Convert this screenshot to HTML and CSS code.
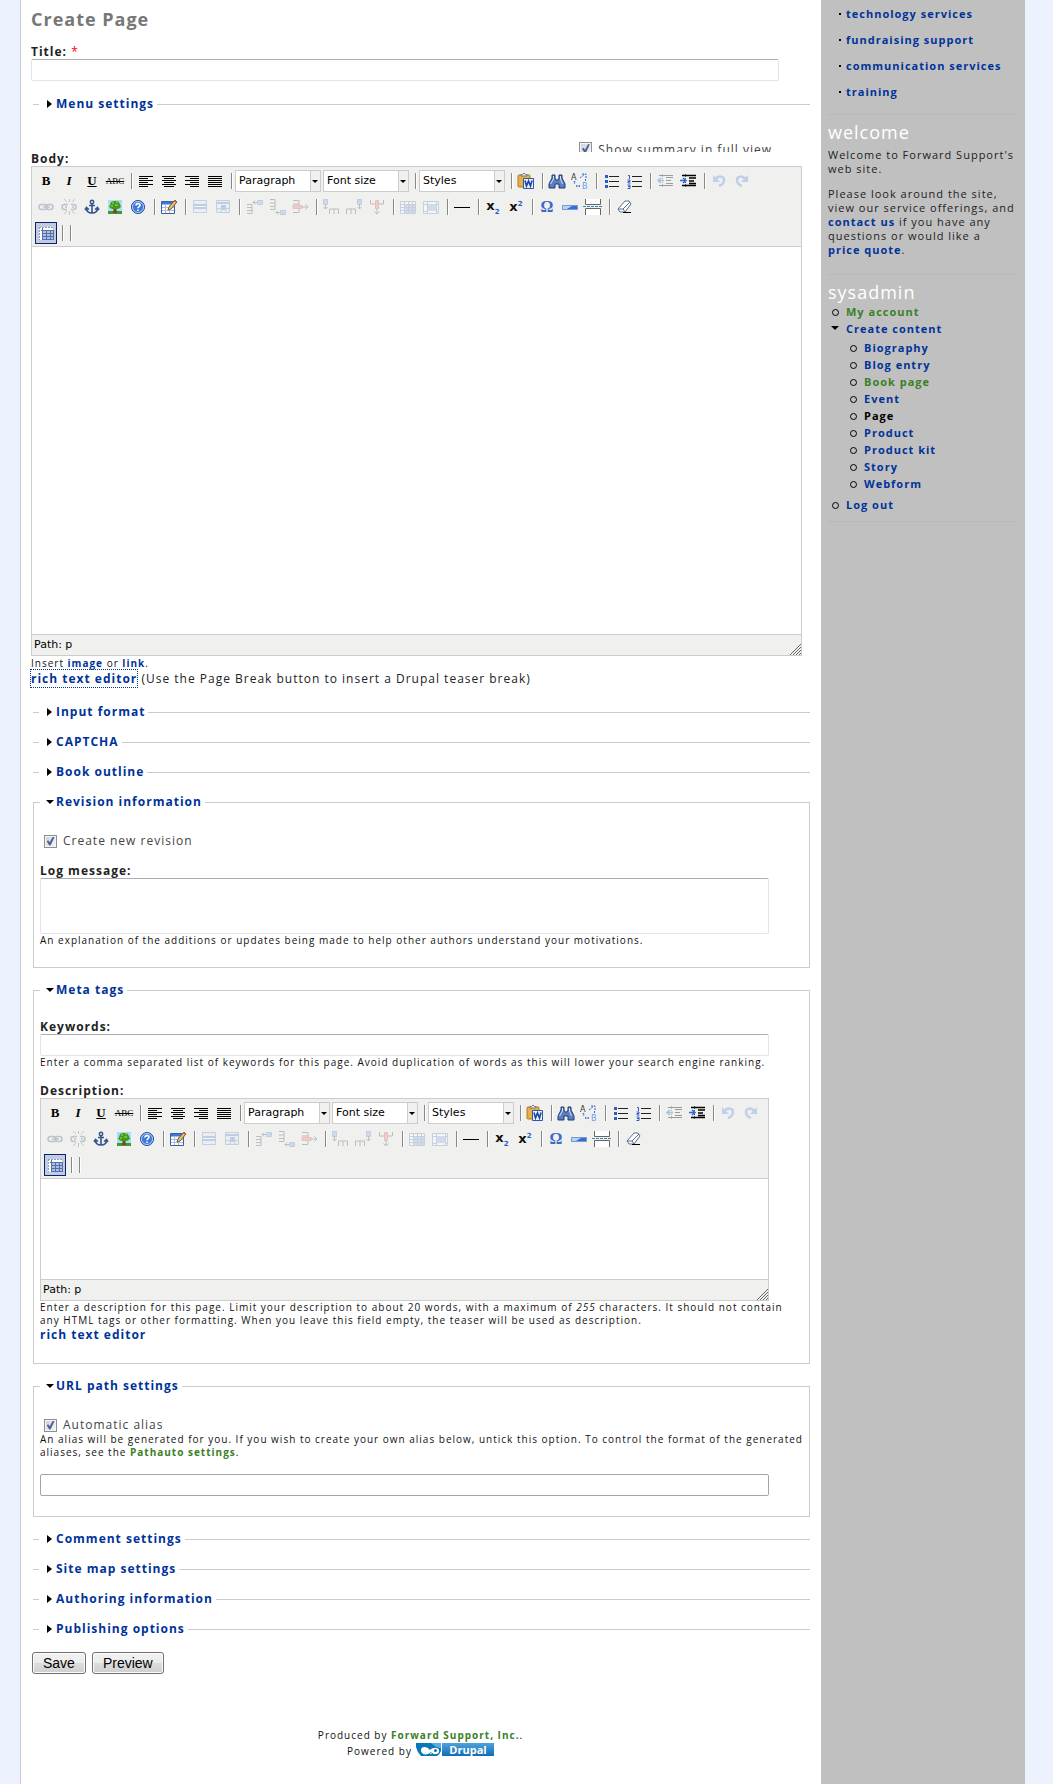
FILE: index.html
```html
<!DOCTYPE html>
<html lang="en">
<head>
<meta charset="utf-8">
<title>Create Page</title>
<link rel="stylesheet" href="styles.css">
</head>
<body>
<svg class="sprite" aria-hidden="true">
  <symbol id="i-left" viewBox="0 0 20 20"><path d="M3 5.500h14M3 7.500h9M3 9.500h14M3 11.500h9M3 13.500h14M3 15.500h9" stroke="#000"/></symbol>
  <symbol id="i-center" viewBox="0 0 20 20"><path d="M3 5.500h14M5 7.500h10M3 9.500h14M5 11.500h10M3 13.500h14M5 15.500h10" stroke="#000"/></symbol>
  <symbol id="i-right" viewBox="0 0 20 20"><path d="M3 5.500h14M8 7.500h9M3 9.500h14M8 11.500h9M3 13.500h14M8 15.500h9" stroke="#000"/></symbol>
  <symbol id="i-full" viewBox="0 0 20 20"><path d="M3 5.500h14M3 7.500h14M3 9.500h14M3 11.500h14M3 13.500h14M3 15.500h14" stroke="#000"/></symbol>
  <symbol id="i-paste" viewBox="0 0 20 20"><rect x="2" y="4" width="12" height="12" rx="1" fill="#e5b04a" stroke="#b07a1c"/><path d="M5 5V3.500h1.500L8 2l1.500 1.500H11V5z" fill="#eee" stroke="#777"/><path d="M7.500 7.500h10v10h-10z" fill="#eaf1ff" stroke="#2d57a8"/><path d="M9 9.500l1.500 5.500 2-5 2 5 1.500-5.500" fill="none" stroke="#1c469c" stroke-width="1.600"/></symbol>
  <symbol id="i-find" viewBox="0 0 20 20"><path d="M5 4h3v3l1 2h2l1-2V4h3v3l3 6v4h-6v-4H8v4H2v-4l3-6z" fill="#5b7fbf" stroke="#1f3b73"/><path d="M6.500 5v3l-3 5M13.500 5v3l2 5" stroke="#d5e2fa" fill="none"/></symbol>
  <symbol id="i-replace" viewBox="0 0 20 20"><text x="1" y="9" class="micro" fill="#333">A</text><text x="12" y="18" class="micro" fill="#6f9bea">B</text><path d="M4.500 10v3M6 15h5" stroke="#2f66d8" stroke-width="1.500" stroke-dasharray="1.500 1"/><path d="M10 7l5-4M12 3h4v4M15.500 8v3" stroke="#2f66d8" fill="none" stroke-dasharray="2 1"/></symbol>
  <symbol id="i-ul" viewBox="0 0 20 20"><path d="M8 5.500h10M8 10.500h10M8 15.500h10" stroke="#222"/><path d="M4 4h3v3H4zM4 9h3v3H4zM4 14h3v3H4z" fill="#2c5bc4"/></symbol>
  <symbol id="i-ol" viewBox="0 0 20 20"><path d="M8 5.500h10M8 10.500h10M8 15.500h10" stroke="#222"/><path d="M4 4.500h1.500V8M3.500 9h2.500v1.500H4V12h2.500M3.500 14H6v3.500H3.500M4 15.500h2" fill="none" stroke="#2c5bc4"/></symbol>
  <symbol id="i-outdent" viewBox="0 0 20 20"><path d="M4 4.500h14M11 6.500h7M11 9.500h5M11 12.500h7M4 14.500h14" stroke="#000"/><path d="M7.500 3v14" stroke="#555" stroke-dasharray="1 1"/><path d="M9 9.500H3M6 7L3 9.500 6 12" fill="none" stroke="#2c66e0" stroke-width="1.500"/></symbol>
  <symbol id="i-indent" viewBox="0 0 20 20"><path d="M4 4.500h14M11 7h7M11 10h5M11 12.500h7M4 14.500h14" stroke="#000" stroke-width="1.500"/><path d="M7.500 3v14" stroke="#555" stroke-dasharray="1 1"/><path d="M2 9.500h6M5 7l3 2.500L5 12" fill="none" stroke="#2c66e0" stroke-width="1.500"/></symbol>
  <symbol id="i-undo" viewBox="0 0 20 20"><path d="M6 9c3-5 9-4 9 0 0 3-2 5-5 6" fill="none" stroke="#6b93e0" stroke-width="2.500"/><path d="M4 4v7h7z" fill="#6b93e0"/></symbol>
  <symbol id="i-redo" viewBox="0 0 20 20"><path d="M14 9c-3-5-9-4-9 0 0 3 2 5 5 6" fill="none" stroke="#6b93e0" stroke-width="2.500"/><path d="M16 4v7H9z" fill="#6b93e0"/></symbol>
  <symbol id="i-link" viewBox="0 0 20 20"><rect x="3" y="7.500" width="8" height="5" rx="2.500" fill="none" stroke="#61738f" stroke-width="1.500"/><rect x="10" y="7.500" width="7" height="5" rx="2.500" fill="none" stroke="#61738f" stroke-width="1.500"/><path d="M7 10h7" stroke="#61738f" stroke-width="1.500"/></symbol>
  <symbol id="i-unlink" viewBox="0 0 20 20"><path d="M9 7.500H5.500a2.500 2.500 0 000 5H8M12 7.500h2.500a2.500 2.500 0 010 5H12M6 10h2M13 10h2" fill="none" stroke="#61738f" stroke-width="1.500"/><path d="M10.500 5V2M8 5L5 2M13 5l3-3M10.500 14v4M8 14l-3 3M13 14l3 3" stroke="#777"/></symbol>
  <symbol id="i-anchor" viewBox="0 0 20 20"><circle cx="10" cy="5" r="1.700" fill="none" stroke="#33558c" stroke-width="1.500"/><path d="M10 6v10M7 8.500h6M4.500 11c0 3 2 5 5.500 5s5.500-2 5.500-5M3 13l1.500-2.500L7 12.500M17 13l-1.500-2.500L13 12.500" fill="none" stroke="#33558c" stroke-width="1.600"/></symbol>
  <symbol id="i-image" viewBox="0 0 20 20"><path d="M3 3h14v14H3z" fill="#a9dcf7"/><path d="M3 14h14v3H3z" fill="#3d9a2c"/><path d="M9 9h2l1 7H8z" fill="#7a4a1c"/><path d="M5 8l1-3 3-1 4 0 2 3 1 3-3 2H7l-3-2z" fill="#3f9a1f"/><path d="M7 6h2M10 8h3M6 9h2M11 5h2" stroke="#b6dd4e"/></symbol>
  <symbol id="i-help" viewBox="0 0 20 20"><circle cx="10" cy="10" r="6.500" fill="#3d77d8" stroke="#1e4da3"/><circle cx="10" cy="10" r="5.500" fill="none" stroke="#b9d0f6"/><path d="M8 8.500c0-2.500 4-2.500 4-.3 0 1.500-2 1.300-2 3M10 12.500V14" fill="none" stroke="#fff" stroke-width="1.600"/></symbol>
  <symbol id="i-edit" viewBox="0 0 20 20"><path d="M2.500 4.500h13v12h-13z" fill="#fff" stroke="#3e5f9c"/><path d="M3 5h12v2.500H3z" fill="#3c77df"/><path d="M3 10.500h12M3 13.500h12M6.500 8v8M10.500 8v8" stroke="#a8bddf"/><path d="M9 13l1-3 6-7 2 2-6 7z" fill="#ecc06d" stroke="#7b5a2a"/><path d="M15 4l2 2 1-1-2-2z" fill="#d9534a"/></symbol>
  <symbol id="i-rowprops" viewBox="0 0 20 20"><path d="M3.500 3.500h13v12h-13z" fill="#dfe8f8" stroke="#7b94bd"/><path d="M4 7h12v5H4z" fill="#5f8ede"/><path d="M4 9.500h12" stroke="#fff"/></symbol>
  <symbol id="i-cellprops" viewBox="0 0 20 20"><path d="M3.500 3.500h13v12h-13z" fill="#dfe8f8" stroke="#7b94bd"/><path d="M4 5h12v2H4zM8 8h5v5H8z" fill="#5f8ede"/><path d="M4 11.500h4M13 11.500h3M8 13v2M13 13v2" stroke="#7b94bd"/></symbol>
  <symbol id="i-rowbefore" viewBox="0 0 20 20"><path d="M3 7.500h5v9H3M3 10.500h5M3 13.500h5" fill="none" stroke="#566"/><path d="M13.500 3.500h5v4h-5z" fill="#8fb0ea" stroke="#6f8fc9"/><path d="M9 5.500h4M11 3.500l-2 2 2 2" fill="none" stroke="#566"/></symbol>
  <symbol id="i-rowafter" viewBox="0 0 20 20"><path d="M3 2.500h5v10H3M3 6h5M3 9.500h5" fill="none" stroke="#566"/><path d="M13.500 13.500h5v4h-5z" fill="#8fb0ea" stroke="#6f8fc9"/><path d="M9 15.500h4M11 13.500l-2 2 2 2" fill="none" stroke="#566"/></symbol>
  <symbol id="i-rowdelete" viewBox="0 0 20 20"><path d="M3 3.500h6v12H3M3 7h6" fill="none" stroke="#566"/><path d="M3 8.500h9v3H3z" fill="#f08a84" stroke="#d66"/><path d="M12 10h6M15.500 7.500L18 10l-2.500 2.500" fill="none" stroke="#566"/></symbol>
  <symbol id="i-colbefore" viewBox="0 0 20 20"><path d="M8.500 17v-5h9v5M13 12v5" fill="none" stroke="#566"/><path d="M2.500 2.500h4v5h-4z" fill="#8fb0ea" stroke="#6f8fc9"/><path d="M4.500 7v5M2.500 10l2 2 2-2" fill="none" stroke="#566"/></symbol>
  <symbol id="i-colafter" viewBox="0 0 20 20"><path d="M2.500 17v-5h9v5M7 12v5" fill="none" stroke="#566"/><path d="M13.500 2.500h4v5h-4z" fill="#8fb0ea" stroke="#6f8fc9"/><path d="M15.500 7v5M13.500 10l2 2 2-2" fill="none" stroke="#566"/></symbol>
  <symbol id="i-coldelete" viewBox="0 0 20 20"><path d="M3.500 3v4h13V3" fill="none" stroke="#566"/><path d="M8.500 3.500h3v8h-3z" fill="#f08a84" stroke="#d66"/><path d="M10 12v5M7.500 14.500L10 17l2.500-2.500" fill="none" stroke="#566"/></symbol>
  <symbol id="i-split" viewBox="0 0 20 20"><path d="M2.500 4.500h15v12h-15z" fill="#fff" stroke="#7b94bd"/><path d="M6 8h11v8H6z" fill="#9ab7ea"/><path d="M3 7.500h14M3 10.500h14M3 13.500h14M6.500 5v11M10.500 5v11M14.500 5v11" stroke="#7b94bd"/></symbol>
  <symbol id="i-merge" viewBox="0 0 20 20"><path d="M2.500 4.500h15v12h-15z" fill="#fff" stroke="#7b94bd"/><path d="M6 7h9v7H6z" fill="#9ab7ea"/><path d="M3 7.500h3M15 7.500h2M3 14.500h3M15 14.500h2M6.500 5v11M15.500 5v11" stroke="#7b94bd"/></symbol>
  <symbol id="i-rule" viewBox="0 0 20 20"><path d="M2 10.500h16" stroke="#000"/></symbol>
  <symbol id="i-advrule" viewBox="0 0 20 20"><path d="M2.500 8.500h15v4h-15z" fill="#2f6fe0" stroke="#7b98cc"/><path d="M3 9h9l-5 3H3z" fill="#b9d2fa"/></symbol>
  <symbol id="i-break" viewBox="0 0 20 20"><path d="M3 2h14v5H3zM3 12h14v6H3z" fill="#fff"/><path d="M2.500 2v5.500h15V2M2.500 18v-6.500h15V18" fill="none" stroke="#666"/><path d="M0 9.500h20" stroke="#3b86b8" stroke-dasharray="3 1"/></symbol>
  <symbol id="i-eraser" viewBox="0 0 20 20"><path d="M4 12l7-8h4l2 3-6 8H6z" fill="#fff" stroke="#5b6f8f"/><path d="M4 12h5l2 3M9 12l7-7" fill="none" stroke="#5b6f8f"/><path d="M9 15.500h8" stroke="#000"/></symbol>
  <symbol id="i-guides" viewBox="0 0 20 20"><path d="M3 4h14v13H3z" fill="#fff"/><path d="M6 8h12v9H6z" fill="#a9c0ea"/><path d="M3.500 4v13M3 4.500h14" stroke="#8a9cc0" stroke-dasharray="2 1"/><path d="M5 7.500h13M6 10.500h12M6 13.500h12M6 16.500h12M6.500 5v12M10.500 7v10M14.500 7v10M17.500 7v10" stroke="#5670a6"/></symbol>
  <symbol id="i-grip" viewBox="0 0 12 12"><path d="M1 12L12 1M4 12l8-8M7 12l5-5M10 12l2-2" stroke="#666"/></symbol>
</svg>

<div class="page">
  <main class="main">
    <h1>Create Page</h1>
    <form>
      <div class="item">
        <label class="caption" for="title">Title: <span class="required">*</span></label>
        <input class="text wide" id="title" type="text">
      </div>

      <fieldset class="collapsed"><legend><a href="#">Menu settings</a></legend></fieldset>

      <div class="teaser"><label class="check"><input type="checkbox" checked> Show summary in full view</label></div>

      <label class="caption" for="body">Body:</label>
      <div class="editor">
        <div class="toolbar">
          <div class="row">
            <button type="button" aria-label="Bold"><b class="glyph">B</b></button>
            <button type="button" aria-label="Italic"><i class="glyph">I</i></button>
            <button type="button" aria-label="Underline"><u class="glyph">U</u></button>
            <button type="button" aria-label="Strikethrough"><s class="strike">ABC</s></button>
            <span class="sep"></span>
            <button type="button" aria-label="Align left"><svg><use href="#i-left"/></svg></button>
            <button type="button" aria-label="Align center"><svg><use href="#i-center"/></svg></button>
            <button type="button" aria-label="Align right"><svg><use href="#i-right"/></svg></button>
            <button type="button" aria-label="Align full"><svg><use href="#i-full"/></svg></button>
            <span class="sep"></span>
            <span class="drop"><select aria-label="Format"><option>Paragraph</option></select></span>
            <span class="drop"><select aria-label="Font size"><option>Font size</option></select></span>
            <span class="sep"></span>
            <span class="drop"><select aria-label="Styles"><option>Styles</option></select></span>
            <span class="sep"></span>
            <button type="button" aria-label="Paste from Word"><svg><use href="#i-paste"/></svg></button>
            <span class="sep"></span>
            <button type="button" aria-label="Find"><svg><use href="#i-find"/></svg></button>
            <button type="button" aria-label="Find and replace"><svg><use href="#i-replace"/></svg></button>
            <span class="sep"></span>
            <button type="button" aria-label="Unordered list"><svg><use href="#i-ul"/></svg></button>
            <button type="button" aria-label="Ordered list"><svg><use href="#i-ol"/></svg></button>
            <span class="sep"></span>
            <button type="button" class="off" aria-label="Outdent"><svg><use href="#i-outdent"/></svg></button>
            <button type="button" aria-label="Indent"><svg><use href="#i-indent"/></svg></button>
            <span class="sep"></span>
            <button type="button" class="off" aria-label="Undo"><svg><use href="#i-undo"/></svg></button>
            <button type="button" class="off" aria-label="Redo"><svg><use href="#i-redo"/></svg></button>
          </div>
          <div class="row">
            <button type="button" class="off" aria-label="Link"><svg><use href="#i-link"/></svg></button>
            <button type="button" class="off" aria-label="Unlink"><svg><use href="#i-unlink"/></svg></button>
            <button type="button" aria-label="Anchor"><svg><use href="#i-anchor"/></svg></button>
            <button type="button" aria-label="Image"><svg><use href="#i-image"/></svg></button>
            <button type="button" aria-label="Help"><svg><use href="#i-help"/></svg></button>
            <span class="sep"></span>
            <button type="button" aria-label="Insert table"><svg><use href="#i-edit"/></svg></button>
            <span class="sep"></span>
            <button type="button" class="off" aria-label="Row properties"><svg><use href="#i-rowprops"/></svg></button>
            <button type="button" class="off" aria-label="Cell properties"><svg><use href="#i-cellprops"/></svg></button>
            <span class="sep"></span>
            <button type="button" class="off" aria-label="Insert row before"><svg><use href="#i-rowbefore"/></svg></button>
            <button type="button" class="off" aria-label="Insert row after"><svg><use href="#i-rowafter"/></svg></button>
            <button type="button" class="off" aria-label="Delete row"><svg><use href="#i-rowdelete"/></svg></button>
            <span class="sep"></span>
            <button type="button" class="off" aria-label="Insert column before"><svg><use href="#i-colbefore"/></svg></button>
            <button type="button" class="off" aria-label="Insert column after"><svg><use href="#i-colafter"/></svg></button>
            <button type="button" class="off" aria-label="Delete column"><svg><use href="#i-coldelete"/></svg></button>
            <span class="sep"></span>
            <button type="button" class="off" aria-label="Split cells"><svg><use href="#i-split"/></svg></button>
            <button type="button" class="off" aria-label="Merge cells"><svg><use href="#i-merge"/></svg></button>
            <span class="sep"></span>
            <button type="button" aria-label="Horizontal rule"><svg><use href="#i-rule"/></svg></button>
            <span class="sep"></span>
            <button type="button" aria-label="Subscript"><span class="script">x<sub>2</sub></span></button>
            <button type="button" aria-label="Superscript"><span class="script">x<sup>2</sup></span></button>
            <span class="sep"></span>
            <button type="button" aria-label="Custom character"><span class="omega">Ω</span></button>
            <button type="button" aria-label="Advanced rule"><svg><use href="#i-advrule"/></svg></button>
            <button type="button" aria-label="Page break"><svg><use href="#i-break"/></svg></button>
            <span class="sep"></span>
            <button type="button" aria-label="Remove formatting"><svg><use href="#i-eraser"/></svg></button>
          </div>
          <div class="row">
            <button type="button" class="active" aria-label="Toggle guidelines"><svg><use href="#i-guides"/></svg></button>
            <span class="sep"></span><span class="sep"></span>
          </div>
        </div>
        <textarea class="canvas tall" id="body"></textarea>
        <div class="status"><span>Path: p</span><svg><use href="#i-grip"/></svg></div>
      </div>
      <p class="insert">Insert <a href="#">image</a> or <a href="#">link</a>.</p>
      <p class="toggle"><a class="focused" href="#">rich text editor</a> (Use the Page Break button to insert a Drupal teaser break)</p>

      <fieldset class="collapsed"><legend><a href="#">Input format</a></legend></fieldset>
      <fieldset class="collapsed"><legend><a href="#">CAPTCHA</a></legend></fieldset>
      <fieldset class="collapsed"><legend><a href="#">Book outline</a></legend></fieldset>

      <fieldset class="open">
        <legend><a href="#">Revision information</a></legend>
        <label class="check"><input type="checkbox" checked> Create new revision</label>
        <div class="item spaced">
          <label class="caption" for="log">Log message:</label>
          <textarea class="text log" id="log"></textarea>
          <p class="description">An explanation of the additions or updates being made to help other authors understand your motivations.</p>
        </div>
      </fieldset>

      <fieldset class="open">
        <legend><a href="#">Meta tags</a></legend>
        <div class="item">
          <label class="caption" for="keywords">Keywords:</label>
          <input class="text" id="keywords" type="text">
          <p class="description">Enter a comma separated list of keywords for this page. Avoid duplication of words as this will lower your search engine ranking.</p>
        </div>
        <div class="item spaced">
          <label class="caption" for="desc">Description:</label>
          <div class="editor">
            <div class="toolbar">
              <div class="row">
                <button type="button" aria-label="Bold"><b class="glyph">B</b></button>
                <button type="button" aria-label="Italic"><i class="glyph">I</i></button>
                <button type="button" aria-label="Underline"><u class="glyph">U</u></button>
                <button type="button" aria-label="Strikethrough"><s class="strike">ABC</s></button>
                <span class="sep"></span>
                <button type="button" aria-label="Align left"><svg><use href="#i-left"/></svg></button>
                <button type="button" aria-label="Align center"><svg><use href="#i-center"/></svg></button>
                <button type="button" aria-label="Align right"><svg><use href="#i-right"/></svg></button>
                <button type="button" aria-label="Align full"><svg><use href="#i-full"/></svg></button>
                <span class="sep"></span>
                <span class="drop"><select aria-label="Format"><option>Paragraph</option></select></span>
                <span class="drop"><select aria-label="Font size"><option>Font size</option></select></span>
                <span class="sep"></span>
                <span class="drop"><select aria-label="Styles"><option>Styles</option></select></span>
                <span class="sep"></span>
                <button type="button" aria-label="Paste from Word"><svg><use href="#i-paste"/></svg></button>
                <span class="sep"></span>
                <button type="button" aria-label="Find"><svg><use href="#i-find"/></svg></button>
                <button type="button" aria-label="Find and replace"><svg><use href="#i-replace"/></svg></button>
                <span class="sep"></span>
                <button type="button" aria-label="Unordered list"><svg><use href="#i-ul"/></svg></button>
                <button type="button" aria-label="Ordered list"><svg><use href="#i-ol"/></svg></button>
                <span class="sep"></span>
                <button type="button" class="off" aria-label="Outdent"><svg><use href="#i-outdent"/></svg></button>
                <button type="button" aria-label="Indent"><svg><use href="#i-indent"/></svg></button>
                <span class="sep"></span>
                <button type="button" class="off" aria-label="Undo"><svg><use href="#i-undo"/></svg></button>
                <button type="button" class="off" aria-label="Redo"><svg><use href="#i-redo"/></svg></button>
              </div>
              <div class="row">
                <button type="button" class="off" aria-label="Link"><svg><use href="#i-link"/></svg></button>
                <button type="button" class="off" aria-label="Unlink"><svg><use href="#i-unlink"/></svg></button>
                <button type="button" aria-label="Anchor"><svg><use href="#i-anchor"/></svg></button>
                <button type="button" aria-label="Image"><svg><use href="#i-image"/></svg></button>
                <button type="button" aria-label="Help"><svg><use href="#i-help"/></svg></button>
                <span class="sep"></span>
                <button type="button" aria-label="Insert table"><svg><use href="#i-edit"/></svg></button>
                <span class="sep"></span>
                <button type="button" class="off" aria-label="Row properties"><svg><use href="#i-rowprops"/></svg></button>
                <button type="button" class="off" aria-label="Cell properties"><svg><use href="#i-cellprops"/></svg></button>
                <span class="sep"></span>
                <button type="button" class="off" aria-label="Insert row before"><svg><use href="#i-rowbefore"/></svg></button>
                <button type="button" class="off" aria-label="Insert row after"><svg><use href="#i-rowafter"/></svg></button>
                <button type="button" class="off" aria-label="Delete row"><svg><use href="#i-rowdelete"/></svg></button>
                <span class="sep"></span>
                <button type="button" class="off" aria-label="Insert column before"><svg><use href="#i-colbefore"/></svg></button>
                <button type="button" class="off" aria-label="Insert column after"><svg><use href="#i-colafter"/></svg></button>
                <button type="button" class="off" aria-label="Delete column"><svg><use href="#i-coldelete"/></svg></button>
                <span class="sep"></span>
                <button type="button" class="off" aria-label="Split cells"><svg><use href="#i-split"/></svg></button>
                <button type="button" class="off" aria-label="Merge cells"><svg><use href="#i-merge"/></svg></button>
                <span class="sep"></span>
                <button type="button" aria-label="Horizontal rule"><svg><use href="#i-rule"/></svg></button>
                <span class="sep"></span>
                <button type="button" aria-label="Subscript"><span class="script">x<sub>2</sub></span></button>
                <button type="button" aria-label="Superscript"><span class="script">x<sup>2</sup></span></button>
                <span class="sep"></span>
                <button type="button" aria-label="Custom character"><span class="omega">Ω</span></button>
                <button type="button" aria-label="Advanced rule"><svg><use href="#i-advrule"/></svg></button>
                <button type="button" aria-label="Page break"><svg><use href="#i-break"/></svg></button>
                <span class="sep"></span>
                <button type="button" aria-label="Remove formatting"><svg><use href="#i-eraser"/></svg></button>
              </div>
              <div class="row">
                <button type="button" class="active" aria-label="Toggle guidelines"><svg><use href="#i-guides"/></svg></button>
                <span class="sep"></span><span class="sep"></span>
              </div>
            </div>
            <textarea class="canvas short" id="desc"></textarea>
            <div class="status"><span>Path: p</span><svg><use href="#i-grip"/></svg></div>
          </div>
          <p class="description">Enter a description for this page. Limit your description to about 20 words, with a maximum of <em>255</em> characters. It should not contain any HTML tags or other formatting. When you leave this field empty, the teaser will be used as description.</p>
          <p class="toggle"><a href="#">rich text editor</a></p>
        </div>
      </fieldset>

      <fieldset class="open">
        <legend><a href="#">URL path settings</a></legend>
        <label class="check"><input type="checkbox" checked> Automatic alias</label>
        <p class="description">An alias will be generated for you. If you wish to create your own alias below, untick this option. To control the format of the generated aliases, see the <a class="visited" href="#">Pathauto settings</a>.</p>
        <div class="item spaced">
          <input class="text alias" type="text" aria-label="Path alias">
        </div>
      </fieldset>

      <fieldset class="collapsed"><legend><a href="#">Comment settings</a></legend></fieldset>
      <fieldset class="collapsed"><legend><a href="#">Site map settings</a></legend></fieldset>
      <fieldset class="collapsed"><legend><a href="#">Authoring information</a></legend></fieldset>
      <fieldset class="collapsed"><legend><a href="#">Publishing options</a></legend></fieldset>

      <div class="actions">
        <button type="submit">Save</button>
        <button type="button">Preview</button>
      </div>
    </form>
    <footer>
      <p>Produced by <a class="visited" href="#">Forward Support, Inc.</a>.</p>
      <p class="powered">Powered by
        <a class="drupal" href="#">
          <svg viewBox="0 0 25 13" aria-hidden="true"><path d="M0 0h25v8q-1 3-4 5H5Q1 9 0 4z" fill="#0c76b8"/><path d="M15 0h10v5q-5 0-10-5z" fill="#5aaee0"/><path d="M5 7c0-4 6-4 9 0 3-3 8-3 9 0 1 5-5 5-8 2-4 4-10 3-10-2z" fill="#fff"/><path d="M14 11q2-3 5 0" fill="none" stroke="#fff"/><circle cx="19.500" cy="7.500" r="1.500" fill="#0c76b8"/></svg><span>Drupal</span>
        </a>
      </p>
    </footer>
  </main>

  <aside class="sidebar">
    <section>
      <ul class="services">
        <li><a href="#">technology services</a></li>
        <li><a href="#">fundraising support</a></li>
        <li><a href="#">communication services</a></li>
        <li><a href="#">training</a></li>
      </ul>
    </section>
    <section>
      <h2>welcome</h2>
      <p>Welcome to Forward Support's web site.</p>
      <p>Please look around the site, view our service offerings, and <a href="#">contact us</a> if you have any questions or would like a <a href="#">price&nbsp;quote</a>.</p>
    </section>
    <section>
      <h2>sysadmin</h2>
      <ul class="menu">
        <li><a class="visited" href="#">My account</a></li>
        <li class="expanded"><a href="#">Create content</a>
          <ul>
            <li><a href="#">Biography</a></li>
            <li><a href="#">Blog entry</a></li>
            <li><a class="visited" href="#">Book page</a></li>
            <li><a href="#">Event</a></li>
            <li><a class="current" href="#">Page</a></li>
            <li><a href="#">Product</a></li>
            <li><a href="#">Product kit</a></li>
            <li><a href="#">Story</a></li>
            <li><a href="#">Webform</a></li>
          </ul>
        </li>
        <li><a href="#">Log out</a></li>
      </ul>
    </section>
  </aside>
</div>
</body>
</html>
```
FILE: styles.css
```css
* { box-sizing: border-box; }

body {
  margin: 0;
  background: #edf2ff;
  color: #111;
  font: 11px/14px "Open Sans", "Noto Sans", sans-serif;
  letter-spacing: 1px;
}

p, h1, h2, ul { margin: 0; padding: 0; }
ul { list-style: none; }

a { color: #039; font-weight: 700; text-decoration: none; }
a.visited { color: #398026; }
a.current { color: #000; }

.sprite { display: none; }
.micro { font: 8px "DejaVu Sans", sans-serif; letter-spacing: 0; }

.page {
  display: flex;
  min-height: 100vh;
  margin: 0 28px 0 20px;
}

/* main column */
.main {
  flex: 1;
  min-width: 0;
  padding: 7px 11px 20px 10px;
  background: #fff;
  border-left: 1px solid #ccc;
}

h1 { margin-bottom: 14px; color: #777; font-size: 18px; line-height: 24px; }

.caption { display: block; font-size: 12px; line-height: 14px; font-weight: 700; color: #222; }
.required { color: #f00; font-weight: 400; }

.text {
  display: block;
  width: calc(100% - 34px);
  height: 22px;
  margin: 0;
  padding: 2px 4px;
  background: #fff;
  border: 1px solid #e3e3ee;
  border-top-color: #abadb3;
  border-radius: 2px;
  resize: none;
}
.text.wide { width: 96%; }
.text.log { height: 56px; }
.text.alias { border-color: #a5a5a5; }

fieldset { min-width: 0; margin: 0 0 14px 2px; padding: 0 6px; border: 0 solid #ccc; }
fieldset.collapsed { border-top-width: 1px; }
fieldset.open { padding: 22px 6px 20px; border-width: 1px; }
legend { padding: 0 3px 0 8px; font-size: 12px; line-height: 16px; }
legend a { display: flex; align-items: center; gap: 4px; }
legend a::before { content: ""; border: 4px solid transparent; border-width: 4px 0 4px 5px; border-left-color: #000; }
.open legend { padding-left: 6px; }
.open legend a { gap: 2px; }
.open legend a::before { border-width: 4px 4px 0; border-color: #000 transparent; }
.item + fieldset { margin-top: 15px; margin-bottom: 30px; }
.spaced { margin-top: 15px; }

.check { display: flex; align-items: center; gap: 6px; margin-top: 1px; padding-left: 4px; color: #444; font-size: 12px; line-height: 16px; }
.check input {
  appearance: none;
  display: grid;
  place-items: center;
  width: 13px;
  height: 13px;
  margin: 0;
  border: 1px solid #8e8f8f;
  background: linear-gradient(135deg, #cbcfd5, #f6f6f6);
  box-shadow: inset 0 0 0 1px #f4f4f4;
}
.check input:checked::before {
  content: "";
  width: 8px;
  height: 9px;
  background: #4b6099;
  clip-path: polygon(0 50%, 25% 45%, 40% 65%, 80% 0, 100% 5%, 50% 100%, 35% 100%);
}
.teaser { display: flex; height: 10px; padding-right: 38px; overflow: hidden; justify-content: flex-end; }
.teaser .check { align-items: flex-start; height: 16px; margin-top: 0; }

/* rich text editor */
.editor { width: 99%; border: 1px solid #ccc; background: #f0f0ee; letter-spacing: 0; }
.spaced .editor { width: calc(100% - 34px); }
.toolbar { padding: 1px 3px 0; border-bottom: 1px solid #ccc; }
.row { display: flex; align-items: center; height: 26px; }
.row button {
  display: grid;
  place-items: center;
  flex: none;
  width: 22px;
  height: 22px;
  margin: 0 1px 0 0;
  padding: 0;
  background: none;
  border: 1px solid transparent;
}
.row button.active { background: #c2cbe0; border-color: #0a246a; }
.row button.off { opacity: .35; }
.row svg { display: block; width: 20px; height: 20px; fill: none; }
.glyph { font: 700 13px/16px "Liberation Serif", serif; color: #000; }
i.glyph { font-style: italic; }
.strike { font: 9px/12px "Liberation Serif", serif; color: #000; }
.script { font: 700 13px/14px "DejaVu Sans", sans-serif; color: #111; }
.script sub, .script sup { font-size: 7px; line-height: 1; color: #2c5bc4; }
.omega { font: 700 16px/18px "Liberation Serif", serif; color: #3c68c8; }
.sep { flex: none; width: 8px; height: 16px; background: linear-gradient(90deg, transparent 4px, #888 4px, #888 5px, #fff 5px, #fff 6px, transparent 6px); }

.drop { position: relative; flex: none; width: 86px; height: 22px; margin-right: 2px; }
.drop select {
  appearance: none;
  width: 100%;
  height: 100%;
  padding: 0 12px 0 3px;
  border: 1px solid #ccc;
  border-radius: 0;
  background: linear-gradient(270deg, #f0f0ee 9px, #ccc 9px, #ccc 10px, #fff 10px);
  color: #000;
  font: 11px/20px "DejaVu Sans", sans-serif;
}
.drop::after {
  content: "";
  position: absolute;
  right: 3px;
  top: 10px;
  border: 3px solid transparent;
  border-width: 3px 3px 0;
  border-top-color: #000;
  pointer-events: none;
}

.canvas { display: block; width: 100%; padding: 8px; border: 0; background: #fff; resize: none; }
.canvas.tall { height: 387px; }
.canvas.short { height: 100px; }
.status {
  display: flex;
  justify-content: space-between;
  align-items: flex-end;
  height: 21px;
  padding-left: 2px;
  border-top: 1px solid #ccc;
  color: #000;
  font: 11px/20px "DejaVu Sans", sans-serif;
}
.status svg { width: 12px; height: 12px; }

.insert { font-size: 10px; }
.toggle { font-size: 12px; line-height: 16px; color: #222; }
.insert + .toggle { margin: 1px 0 17px; }
.focused { outline: 1px dotted #039; }
.description { font-size: 10px; line-height: 13px; }

.actions { display: flex; gap: 6px; padding: 1px 0 0 1px; }
.actions button {
  height: 22px;
  padding: 0 10px;
  border: 1px solid #707070;
  border-radius: 3px;
  background: linear-gradient(#f2f2f2, #ebebeb 50%, #ddd 50%, #cfcfcf);
  box-shadow: inset 0 0 0 1px #fcfcfc;
  color: #000;
  font: 14px/18px "Liberation Sans", Arial, sans-serif;
}

footer { margin-top: 54px; font-size: 10px; text-align: center; }
.powered { display: flex; justify-content: center; gap: 4px; line-height: 18px; }
.drupal { display: flex; gap: 1px; height: 13px; margin-top: 1px; }
.drupal svg { width: 25px; height: 13px; }
.drupal span {
  width: 52px;
  background: linear-gradient(#4fa3dc, #0f6db4);
  color: #fff;
  font: 700 11px/13px "Open Sans", sans-serif;
  letter-spacing: 0;
}

/* sidebar */
.sidebar { flex: none; width: 204px; padding: 0 7px; background: #c0c0c0; color: #222; }
.sidebar section { border-bottom: 1px solid #b8b8b8; }
.services { padding: 7px 0 15px 11px; }
.services li { display: flex; align-items: center; gap: 5px; height: 14px; margin-bottom: 12px; }
.services li::before { content: ""; width: 2px; height: 2px; background: #000; }
.services li:last-child { margin-bottom: 0; }
h2 { padding-top: 6px; color: #fff; font-size: 18px; line-height: 22px; font-weight: 400; }
h2 + p { padding-top: 5px; }
.sidebar p { padding-bottom: 11px; }
.sidebar p:last-child { padding-bottom: 17px; }
.menu { padding-bottom: 8px; }
.menu li { padding-left: 18px; line-height: 17px; position: relative; }
.menu li::before {
  content: "";
  position: absolute;
  left: 4px;
  top: 6px;
  width: 5px;
  height: 5px;
  border: 1px solid #000;
  border-radius: 50%;
}
.menu .expanded::before { left: 3px; width: 0; height: 0; border: 4px solid transparent; border-width: 4px 4px 0; border-top-color: #000; border-radius: 0; }
.menu ul { padding: 2px 0 4px; }
```
